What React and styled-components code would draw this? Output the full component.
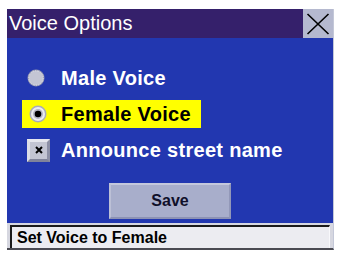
import React from "react";
import styled, { createGlobalStyle } from "styled-components";

const Global = createGlobalStyle`
  html, body { margin: 0; padding: 0; background: #ffffff; }
  body { font-family: "Liberation Sans", Arial, sans-serif; }
`;

const Frame = styled.div`
  margin: 9px 0 0 7px;
  width: 326px;
  display: flex;
  flex-direction: column;
  border-right: 1px solid #c4c8d8;
  border-bottom: 2px solid #4a4a52;
`;

const TitleBar = styled.div`
  height: 29px;
  display: flex;
  align-items: stretch;
  background: #35206b;
`;

const Title = styled.div`
  flex: 1;
  display: flex;
  align-items: center;
  padding-left: 2px;
  color: #ffffff;
  font-size: 20px;
`;

const CloseButton = styled.div`
  width: 30px;
  display: flex;
  align-items: center;
  justify-content: center;
  background: #b5b9cf;
`;

const Body = styled.div`
  height: 185px;
  box-sizing: border-box;
  background: #2237b0;
  padding: 26px 0 3px 0;
  display: flex;
  flex-direction: column;
`;

const Options = styled.div`
  display: flex;
  flex-direction: column;
  gap: 8px;
  align-items: flex-start;
  padding-left: 15px;
`;

const Option = styled.div`
  height: 28px;
  display: flex;
  align-items: center;
  gap: 10px;
  padding: 0 10px 0 5px;
  background: ${(p) => (p.$active ? "#ffff00" : "transparent")};
  color: ${(p) => (p.$active ? "#000000" : "#ffffff")};
  font-size: 20px;
  font-weight: bold;
  letter-spacing: 0.3px;
`;

const Indicator = styled.div`
  width: 24px;
  display: flex;
  align-items: center;
  justify-content: flex-start;
  padding-left: ${(p) => p.$pad || 0}px;
  box-sizing: border-box;
`;

const CheckBox = styled.div`
  width: 23px;
  height: 23px;
  box-sizing: border-box;
  background: #c3c5d3;
  border-top: 3px solid #e6e7ee;
  border-left: 3px solid #dcdde6;
  border-bottom: 3px solid #80839a;
  border-right: 3px solid #8d90a6;
  display: flex;
  align-items: center;
  justify-content: center;
`;

const SaveButton = styled.div`
  align-self: center;
  margin-top: 19px;
  width: 122px;
  height: 36px;
  box-sizing: border-box;
  background: #a8aecb;
  border-top: 2px solid #c4c8dc;
  border-left: 2px solid #bcc0d6;
  border-bottom: 2px solid #8c92b4;
  border-right: 2px solid #9298b8;
  display: flex;
  align-items: center;
  justify-content: center;
  color: #10102a;
  font-size: 16px;
  font-weight: bold;
`;

const StatusWrap = styled.div`
  height: 25px;
  box-sizing: border-box;
  background: #d6d7e0;
  padding: 2px 3px 0 3px;
  display: flex;
`;

const StatusBox = styled.div`
  flex: 1;
  box-sizing: border-box;
  background: #ececf1;
  border-top: 2px solid #1a1a1a;
  border-left: 2px solid #1a1a1a;
  border-right: 1px solid #f8f8fb;
  padding-left: 5px;
  display: flex;
  align-items: center;
  color: #000000;
  font-size: 16px;
  font-weight: bold;
`;

function Radio({ checked }) {
  return checked ? (
    <svg width="18" height="18" viewBox="0 0 18 18">
      <circle cx="9" cy="9" r="8.5" fill="#a9abb8" />
      <circle cx="9" cy="9" r="7" fill="#ececf0" />
      <circle cx="9" cy="9" r="5" fill="#b4b6c4" />
      <circle cx="9" cy="9" r="3.3" fill="#000000" />
    </svg>
  ) : (
    <svg width="18" height="18" viewBox="0 0 18 18">
      <circle cx="9" cy="9" r="8.5" fill="#9397b2" />
      <circle cx="9" cy="9" r="7.2" fill="#c3c5d4" stroke="#e4e5ec" strokeWidth="1" strokeDasharray="1.5 1" />
    </svg>
  );
}

export default function App() {
  return (
    <>
      <Global />
      <Frame>
        <TitleBar>
          <Title>Voice Options</Title>
          <CloseButton>
            <svg width="24" height="22" viewBox="0 0 24 22">
              <path d="M1.5 1 L22.5 21 M22.5 1 L1.5 21" stroke="#000" strokeWidth="1.6" fill="none" />
            </svg>
          </CloseButton>
        </TitleBar>
        <Body>
          <Options>
            <Option>
              <Indicator>
                <Radio />
              </Indicator>
              Male Voice
            </Option>
            <Option $active>
              <Indicator $pad={2}>
                <Radio checked />
              </Indicator>
              Female Voice
            </Option>
            <Option>
              <Indicator>
                <CheckBox>
                  <svg width="8" height="8" viewBox="0 0 8 8">
                    <path d="M1 1 L7 7 M7 1 L1 7" stroke="#000" strokeWidth="2" />
                  </svg>
                </CheckBox>
              </Indicator>
              Announce street name
            </Option>
          </Options>
          <SaveButton>Save</SaveButton>
        </Body>
        <StatusWrap>
          <StatusBox>Set Voice to Female</StatusBox>
        </StatusWrap>
      </Frame>
    </>
  );
}
